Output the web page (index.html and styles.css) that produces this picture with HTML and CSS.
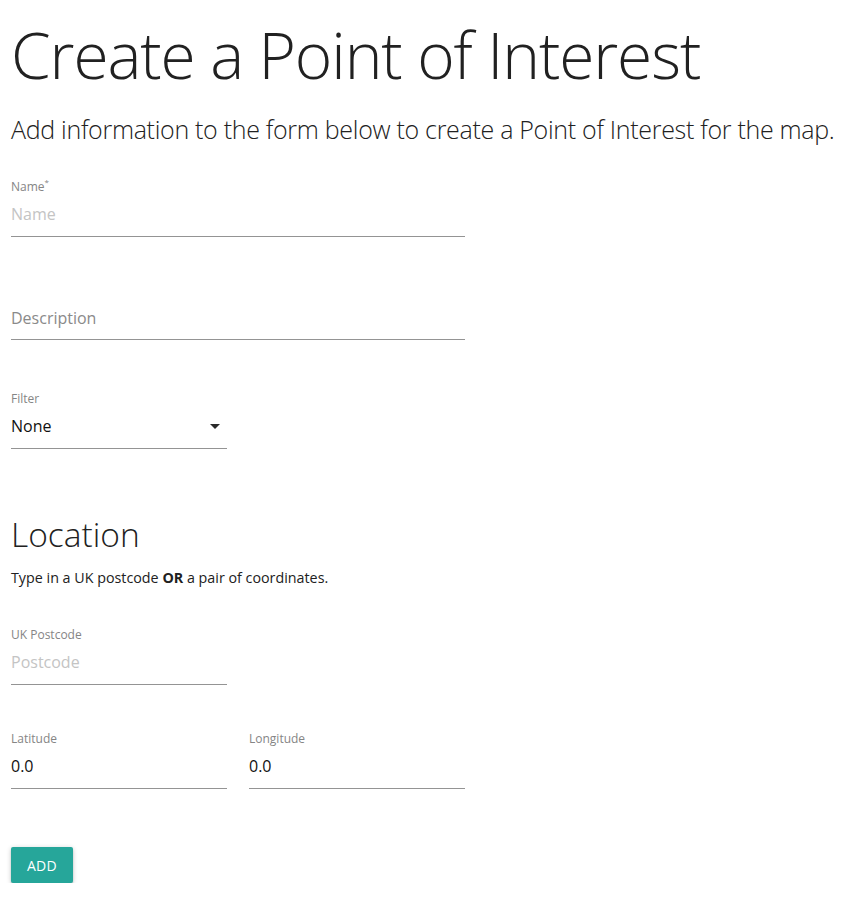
FILE: index.html
```html
<!DOCTYPE html>
<html lang="en">
<head>
<meta charset="utf-8">
<title>Create a Point of Interest</title>
<link rel="stylesheet" href="styles.css">
</head>
<body>
<main class="page">
  <h1 class="title">Create a Point of Interest</h1>
  <p class="lead">Add information to the form below to create a Point of Interest for the map.</p>

  <form class="form">
    <div class="field field--wide field--name">
      <label class="field-label">Name<sup class="req">*</sup></label>
      <div class="field-control"><span class="placeholder">Name</span></div>
    </div>

    <div class="field field--wide field--desc">
      <div class="field-label"></div>
      <div class="field-control field-control--inlabel"><span class="inlabel">Description</span></div>
    </div>

    <div class="field field--narrow field--filter">
      <label class="field-label">Filter</label>
      <div class="field-control field-control--select">
        <span class="value">None</span>
        <svg class="caret" width="10" height="5" viewBox="0 0 10 5"><path d="M0 0l5 5 5-5z" fill="#2a2a2a"/></svg>
      </div>
    </div>

    <h2 class="section-title">Location</h2>
    <p class="section-help">Type in a UK postcode <strong>OR</strong> a pair of coordinates.</p>

    <div class="field field--narrow field--postcode">
      <label class="field-label">UK Postcode</label>
      <div class="field-control"><span class="placeholder">Postcode</span></div>
    </div>

    <div class="coords">
      <div class="field field--narrow">
        <label class="field-label">Latitude</label>
        <div class="field-control"><span class="value">0.0</span></div>
      </div>
      <div class="field field--narrow">
        <label class="field-label">Longitude</label>
        <div class="field-control"><span class="value">0.0</span></div>
      </div>
    </div>

    <div class="actions">
      <button type="button" class="btn">ADD</button>
    </div>
  </form>
</main>
</body>
</html>
```

FILE: styles.css
```css
* { box-sizing: border-box; }

html, body {
  margin: 0;
  padding: 0;
  background: #ffffff;
}

body {
  font-family: "Open Sans", "Noto Sans", "Liberation Sans", sans-serif;
  color: #212121;
}

.page {
  padding: 0 11px;
}

.title {
  margin: 17px 0 0 0;
  font-size: 64px;
  line-height: 76px;
  font-weight: 350;
  letter-spacing: -1.1px;
  color: #212121;
  white-space: nowrap;
}

.lead {
  margin: 20px 0 0 0;
  font-size: 25px;
  line-height: 32px;
  font-weight: 350;
  letter-spacing: -0.3px;
  color: #212121;
  white-space: nowrap;
}

.form {
  display: flex;
  flex-direction: column;
  align-items: flex-start;
}

.field {
  display: flex;
  flex-direction: column;
}

.field--wide { width: 454px; }
.field--narrow { width: 216px; }

.field--name { margin-top: 33px; }
.field--desc { margin-top: 44px; }
.field--filter { margin-top: 50px; }
.field--postcode { margin-top: 38px; }

.field-label {
  font-size: 12px;
  line-height: 16px;
  height: 17px;
  padding-top: 1px;
  margin-bottom: 3px;
  color: #858585;
}

.req {
  font-size: 8px;
  vertical-align: top;
  line-height: 8px;
  position: relative;
  top: -1px;
}

.field-control {
  display: flex;
  align-items: flex-start;
  justify-content: space-between;
  font-size: 16px;
  line-height: 19px;
  padding: 7px 0 12px 0;
  border-bottom: 1px solid #949494;
}

.field-control--inlabel {
  padding: 8px 0 11px 0;
}

.placeholder { color: #c4c4c4; }
.inlabel { color: #8a8a8a; }
.value { color: #111111; }

.field-control--select {
  padding-right: 7px;
}

.caret {
  margin-top: 7px;
}

.section-title {
  margin: 66px 0 0 0;
  font-size: 33.5px;
  line-height: 38px;
  font-weight: 350;
  color: #212121;
}

.section-help {
  margin: 15px 0 0 0;
  font-size: 14.3px;
  line-height: 20px;
  color: #212121;
}

.section-help strong { font-weight: 700; }

.coords {
  display: flex;
  gap: 22px;
  margin-top: 45px;
}

.actions {
  margin-top: 58px;
}

.btn {
  display: inline-flex;
  align-items: center;
  justify-content: center;
  width: 62px;
  height: 36px;
  padding: 0;
  border: none;
  border-radius: 2px;
  background: #26a69a;
  color: #ffffff;
  font-family: inherit;
  font-size: 14px;
  letter-spacing: 0.3px;
  box-shadow: 0 2px 2px 0 rgba(0,0,0,0.14), 0 3px 1px -2px rgba(0,0,0,0.12), 0 1px 5px 0 rgba(0,0,0,0.2);
  cursor: pointer;
}
```
